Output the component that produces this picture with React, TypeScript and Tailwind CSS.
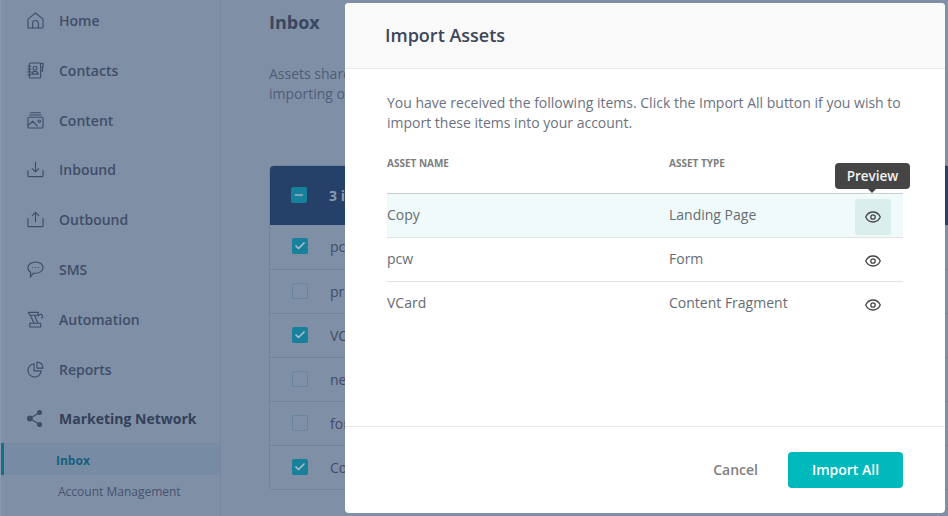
import { Check, Minus } from "lucide-react";
import type { ReactNode } from "react";

const Svg = ({ children }: { children: ReactNode }) => (
  <svg viewBox="0 0 18 18" className="h-[17px] w-[17px]" fill="none" stroke="currentColor" strokeWidth="1.200" strokeLinecap="round" strokeLinejoin="round">
    {children}
  </svg>
);

const navItems: { label: string; icon: ReactNode; bold?: boolean }[] = [
  {
    label: "Home",
    icon: (
      <Svg>
        <path d="M1 7.500 9 1l8 6.500V16a1 1 0 0 1-1 1H2a1 1 0 0 1-1-1z" />
        <path d="M6 17v-5a3 3 0 0 1 6 0v5" />
      </Svg>
    ),
  },
  {
    label: "Contacts",
    icon: (
      <Svg>
        <rect x="2.500" y="1" width="12" height="16" rx="1.500" />
        <circle cx="8.500" cy="6.500" r="2" />
        <path d="M5 12.800c.4-2.200 2-2.900 3.500-2.900s3.100.7 3.500 2.900z" />
        <path d="M1 4.500h3M1 7.500h3M1 10.500h3M1 13.500h3M14.500 1.500h2.500v4h-2.500M14.500 5.500h2v4h-2" />
      </Svg>
    ),
  },
  {
    label: "Content",
    icon: (
      <Svg>
        <path d="M4 .8h10M2.800 3.200h12.400" />
        <rect x="1" y="5.500" width="16" height="11.500" rx="1.500" />
        <path d="M1 14.500 6 9.800l5 5.200" />
        <circle cx="13" cy="9.800" r="1.300" />
      </Svg>
    ),
  },
  {
    label: "Inbound",
    icon: (
      <Svg>
        <path d="M9 1.500v10M5.500 8 9 11.500 12.500 8" />
        <path d="M1 10v5.500a1 1 0 0 0 1 1h14a1 1 0 0 0 1-1V10" />
      </Svg>
    ),
  },
  {
    label: "Outbound",
    icon: (
      <Svg>
        <path d="M9 11.500v-10M5.500 5 9 1.500 12.500 5" />
        <path d="M1 8v7.500a1 1 0 0 0 1 1h14a1 1 0 0 0 1-1V8" />
      </Svg>
    ),
  },
  {
    label: "SMS",
    icon: (
      <Svg>
        <path d="M9 1c4.400 0 8 2.600 8 6s-3.600 6-8 6c-.8 0-1.500-.1-2.200-.2L3.500 17l.4-5C2.100 10.900 1 9.100 1 7c0-3.400 3.600-6 8-6z" />
        <path d="M6 7h.1M9 7h.1M12 7h.1" />
      </Svg>
    ),
  },
  {
    label: "Automation",
    icon: (
      <Svg>
        <path d="M1.500 1.500h10.500l-1 3H3zM3.500 4.500l4 8.500M8 4.500l3.500 8.500M5 13h8M3 17h11.500v-4H3z" />
        <path d="M12 5.500a2.200 2.200 0 1 1 3.500 2" />
      </Svg>
    ),
  },
  {
    label: "Reports",
    icon: (
      <Svg>
        <path d="M7.500 3a7 7 0 1 0 7.500 7.500H7.500z" />
        <path d="M10.500 1a6.500 6.500 0 0 1 6.500 6.500h-6.500z" />
      </Svg>
    ),
  },
  {
    label: "Marketing Network",
    bold: true,
    icon: (
      <svg viewBox="0 0 17 17" className="h-[17px] w-[17px]" fill="currentColor" stroke="currentColor" strokeWidth="1.200">
        <path d="M12.500 2.500 3 8.500l9.500 6" fill="none" />
        <circle cx="12.500" cy="2.500" r="1.900" />
        <circle cx="2.800" cy="8.500" r="2.300" />
        <circle cx="12.500" cy="14.500" r="1.900" />
      </svg>
    ),
  },
];

const bgRows = [
  { name: "pcw", checked: true },
  { name: "preview", checked: false },
  { name: "VCard", checked: true },
  { name: "newsletter", checked: false },
  { name: "form", checked: false },
  { name: "Copy", checked: true },
];

const assets = [
  { name: "Copy", type: "Landing Page" },
  { name: "pcw", type: "Form" },
  { name: "VCard", type: "Content Fragment" },
];

const EyeIcon = () => (
  <svg viewBox="0 0 16 12" className="h-[12px] w-[16px]" fill="none" stroke="#454545" strokeWidth="1.300">
    <path d="M.7 6C2.300 2.700 5 1 8 1s5.700 1.700 7.300 5C13.700 9.300 11 11 8 11S2.300 9.300.7 6z" />
    <circle cx="8" cy="6" r="2.200" />
  </svg>
);

export default function App() {
  return (
    <div className="relative flex h-[516px] w-[948px] overflow-hidden bg-[#7f8fa6] font-['Open_Sans',sans-serif] text-[#3f4d68]">
      {/* sidebar */}
      <aside className="-mt-[4.4px] flex w-[221px] shrink-0 flex-col border-r border-l border-r-[#76869e] border-l-[#8c9ab0]">
        {navItems.map((item) => (
          <div key={item.label} className="flex h-[49.8px] items-center">
            <span className="ml-[26px] flex w-[32px] text-[#3f4d68]">{item.icon}</span>
            <span className={item.bold ? "text-[14px] font-bold text-[#343f58]" : "text-[14px] font-semibold"}>{item.label}</span>
          </div>
        ))}
        <div className="-mt-[0.8px] flex h-[32px] items-center border-l-[3px] border-[#136f8c] bg-[#788ba5] pt-[4px] pl-[52px] text-[12px] font-bold text-[#14607e]">
          Inbox
        </div>
        <div className="flex h-[32px] items-center pt-[3px] pl-[57px] text-[12px] text-[#46536e]">Account Management</div>
      </aside>

      {/* page behind the modal */}
      <main className="min-w-0 flex-1 pl-[48px]">
        <h1 className="mt-[9px] text-[18px] leading-[26px] font-bold text-[#3a4660]">Inbox</h1>
        <p className="mt-[29px] text-[14px] leading-[20px] text-[#4f5d78]">
          Assets shared
          <br />
          importing or
        </p>
        <div className="mt-[61px] w-[700px] overflow-hidden rounded-[5px] border border-[#72839c]">
          <div className="-mx-px -mt-px flex h-[60px] items-center bg-[#254069] pl-[22px]">
            <span className="flex h-[16px] w-[16px] items-center justify-center rounded-[2px] bg-[#17819b]">
              <Minus className="h-[12px] w-[12px] text-[#9fb4c5]" strokeWidth={3} />
            </span>
            <span className="ml-[22px] text-[14px] font-bold text-[#8c9ab0]">3 items selected</span>
          </div>
          {bgRows.map((row, i) => (
            <div key={row.name} className={`flex h-[44px] items-center pb-[1px] pl-[22px] ${i > 0 ? "border-t border-[#72839c]" : ""}`}>
              {row.checked ? (
                <span className="mb-[1px] flex h-[16px] w-[16px] items-center justify-center rounded-[2px] bg-[#17819b]">
                  <Check className="h-[12px] w-[12px] text-[#a8bccb]" strokeWidth={3.500} />
                </span>
              ) : (
                <span className="mb-[1px] h-[16px] w-[16px] rounded-[2px] border border-[#66859f]" />
              )}
              <span className="ml-[22px] text-[14px] text-[#3f4d68]">{row.name}</span>
            </div>
          ))}
        </div>
      </main>

      {/* modal */}
      <div className="absolute top-[3px] left-[345px] flex h-[510px] w-[600px] flex-col overflow-hidden rounded-[4px] bg-white">
        <div className="flex h-[66px] shrink-0 items-center border-b border-[#e8e8e8] bg-[#f9f9f9] pl-[40px] text-[18px] font-semibold text-[#3b4658]">
          Import Assets
        </div>
        <div className="flex-1 px-[42px] pt-[24px]">
          <p className="text-[14px] leading-[20px] text-[#6b7280]">
            You have received the following items. Click the Import All button if you wish to import these items into your account.
          </p>
          <div className="mt-[23px] flex h-[38px] border-b border-[#c9cdcd] text-[10px] leading-[14px] font-bold text-[#7d7d7d] uppercase">
            <span className="w-[282px]">Asset Name</span>
            <span>Asset Type</span>
          </div>
          {assets.map((asset, i) => (
            <div
              key={asset.name}
              className={`flex h-[44px] items-center border-b text-[14px] text-[#666c75] ${i === 0 ? "bg-[#f0fafa]" : ""} ${i < assets.length - 1 ? "border-[#e2e4e4]" : "border-transparent"}`}
            >
              <span className="w-[282px] pb-[2px]">{asset.name}</span>
              <span className="flex-1 pb-[2px]">{asset.type}</span>
              <span className={`relative mt-[3px] mr-[12px] flex h-[36px] w-[36px] items-center justify-center rounded-[3px] ${i === 0 ? "bg-[#d9eeed]" : ""}`}>
                <EyeIcon />
                {i === 0 && (
                  <span className="absolute top-[-36px] left-[-20px] flex h-[26px] w-[75px] items-center justify-center rounded-[4px] bg-[#454545] text-[13.5px] font-semibold text-[#f2f2f2]">
                    Preview
                    <span className="absolute bottom-[-4px] left-[33px] h-0 w-0 border-x-[4px] border-t-[4px] border-x-transparent border-t-[#454545]" />
                  </span>
                )}
              </span>
            </div>
          ))}
        </div>
        <div className="flex h-[87px] shrink-0 items-center justify-end border-t border-[#e8e8e8] pr-[42px]">
          <span className="mr-[30px] pb-[2px] text-[14px] font-semibold text-[#808080]">Cancel</span>
          <button className="h-[36px] w-[115px] rounded-[4px] bg-[#00b9bd] pb-[2px] text-[14px] font-semibold text-white">Import All</button>
        </div>
      </div>
    </div>
  );
}
